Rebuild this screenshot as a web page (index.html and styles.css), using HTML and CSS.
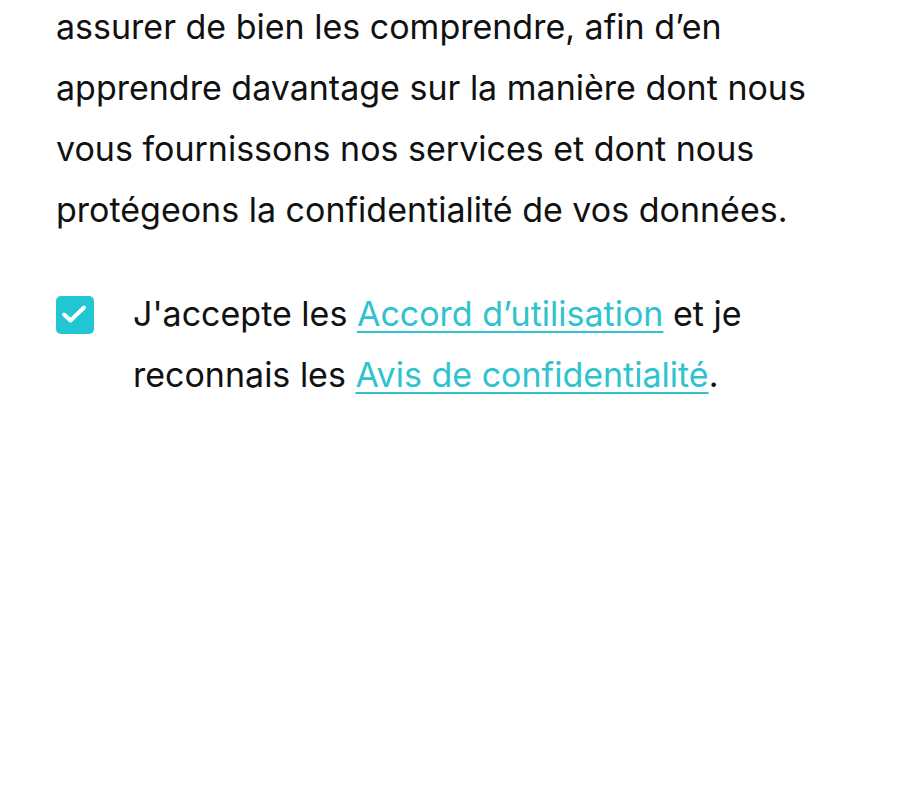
FILE: index.html
```html
<!DOCTYPE html>
<html lang="fr">
<head>
<meta charset="utf-8">
<link rel="stylesheet" href="styles.css">
</head>
<body>
<main class="page">
  <p class="intro">assurer de bien les comprendre, afin d’en apprendre davantage sur la manière dont nous vous fournissons nos services et dont nous protégeons la confidentialité de vos données.</p>
  <div class="consent">
    <span class="checkbox">
      <svg viewBox="0 0 38 38" width="38" height="38" aria-hidden="true">
        <path d="M8 18.5 L14.5 24.5 L28 11.5" fill="none" stroke="#fff" stroke-width="4" stroke-linecap="round" stroke-linejoin="round"/>
      </svg>
    </span>
    <p class="consent-text">J'accepte les <a href="#">Accord d’utilisation</a> et je reconnais les <a href="#">Avis de confidentialité</a>.</p>
  </div>
</main>
</body>
</html>
```
FILE: styles.css
```css
html, body {
  margin: 0;
  padding: 0;
  background: #ffffff;
}
.page {
  margin-top: -4px;
  padding: 0 40px 0 56px;
  font-family: Inter, "Noto Sans", sans-serif;
  font-size: 34px;
  line-height: 61px;
  color: #111111;
}
.intro {
  margin: 0;
  max-width: 790px;
}
.consent {
  display: flex;
  align-items: flex-start;
  gap: 39px;
  margin-top: 43px;
}
.checkbox {
  flex: none;
  width: 38px;
  height: 38px;
  margin-top: 13px;
  background: #22c6d3;
  border-radius: 5px;
  display: flex;
}
.consent-text {
  margin: 0;
  max-width: 700px;
}
.consent-text a {
  color: #2fc3cf;
  text-decoration: underline;
  text-underline-offset: 5px;
  text-decoration-thickness: 2px;
}
```
